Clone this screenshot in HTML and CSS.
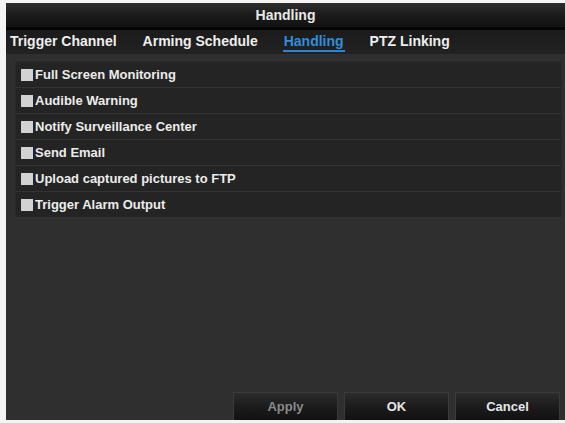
FILE: index.html
```html
<!DOCTYPE html>
<html>
<head>
<meta charset="utf-8">
<link rel="stylesheet" href="styles.css">
</head>
<body>
<div class="dialog">
  <div class="titlebar">Handling</div>
  <div class="divider"></div>
  <div class="tabs">
    <span class="tab">Trigger Channel</span>
    <span class="tab">Arming Schedule</span>
    <span class="tab active">Handling</span>
    <span class="tab">PTZ Linking</span>
  </div>
  <div class="content">
    <div class="list">
      <div class="row"><span class="check"></span><span class="label">Full Screen Monitoring</span></div>
      <div class="row"><span class="check"></span><span class="label">Audible Warning</span></div>
      <div class="row"><span class="check"></span><span class="label">Notify Surveillance Center</span></div>
      <div class="row"><span class="check"></span><span class="label">Send Email</span></div>
      <div class="row"><span class="check"></span><span class="label">Upload captured pictures to FTP</span></div>
      <div class="row"><span class="check"></span><span class="label">Trigger Alarm Output</span></div>
    </div>
    <div class="spacer"></div>
    <div class="buttons">
      <button class="btn disabled">Apply</button>
      <button class="btn">OK</button>
      <button class="btn">Cancel</button>
    </div>
  </div>
</div>
</body>
</html>
```
FILE: styles.css
```css
html, body {
  margin: 0;
  padding: 0;
  background: #f4f4f4;
  width: 565px;
  height: 423px;
  overflow: hidden;
}
body {
  font-family: "Liberation Sans", Arial, sans-serif;
  font-weight: bold;
  color: #ececec;
}
.dialog {
  margin: 3px 0 0 6px;
  width: 559px;
  height: 417px;
  display: flex;
  flex-direction: column;
  background: #2f2f2f;
}
.titlebar {
  height: 24px;
  line-height: 24px;
  text-align: center;
  font-size: 14px;
  background: linear-gradient(#2e2e2e, #1b1b1b 50%, #121212);
  color: #e8e8e8;
}
.divider {
  height: 3px;
  background: #050505;
}
.tabs {
  height: 24px;
  display: flex;
  align-items: center;
  gap: 26px;
  padding-left: 4px;
  background: linear-gradient(#1b1b1b, #222222);
  font-size: 14px;
}
.tab {
  line-height: 17px;
  border-bottom: 2px solid transparent;
  color: #eeeeee;
}
.tab.active {
  color: #2f8fdc;
  border-bottom-color: #2a86d4;
  padding: 0 1px;
  margin: 0 -1px;
}
.content {
  flex: 1;
  display: flex;
  flex-direction: column;
  padding: 7px 3px 0 9px;
  background: #2f2f2f;
}
.list {
  background: #242424;
  border: 1px solid #2a2a2a;
  border-bottom: none;
}
.row {
  height: 25px;
  border-bottom: 1px solid #333333;
  display: flex;
  align-items: center;
  padding-left: 5px;
  font-size: 13px;
}
.check {
  width: 12px;
  height: 12px;
  background: #d2d2d2;
  margin-right: 2px;
  flex: none;
}
.label {
  color: #ececec;
}
.spacer {
  flex: 1;
}
.buttons {
  display: flex;
  justify-content: flex-end;
  gap: 6px;
  padding-right: 2px;
}
.btn {
  width: 105px;
  height: 28px;
  border: 1px solid #3a3a3a;
  border-bottom: none;
  background: linear-gradient(#2c2c2c, #1c1c1c 50%, #111111);
  font-family: "Liberation Sans", Arial, sans-serif;
  font-weight: bold;
  font-size: 13px;
  color: #e6e6e6;
  padding: 0;
}
.btn.disabled {
  color: #8a8a8a;
}
```
